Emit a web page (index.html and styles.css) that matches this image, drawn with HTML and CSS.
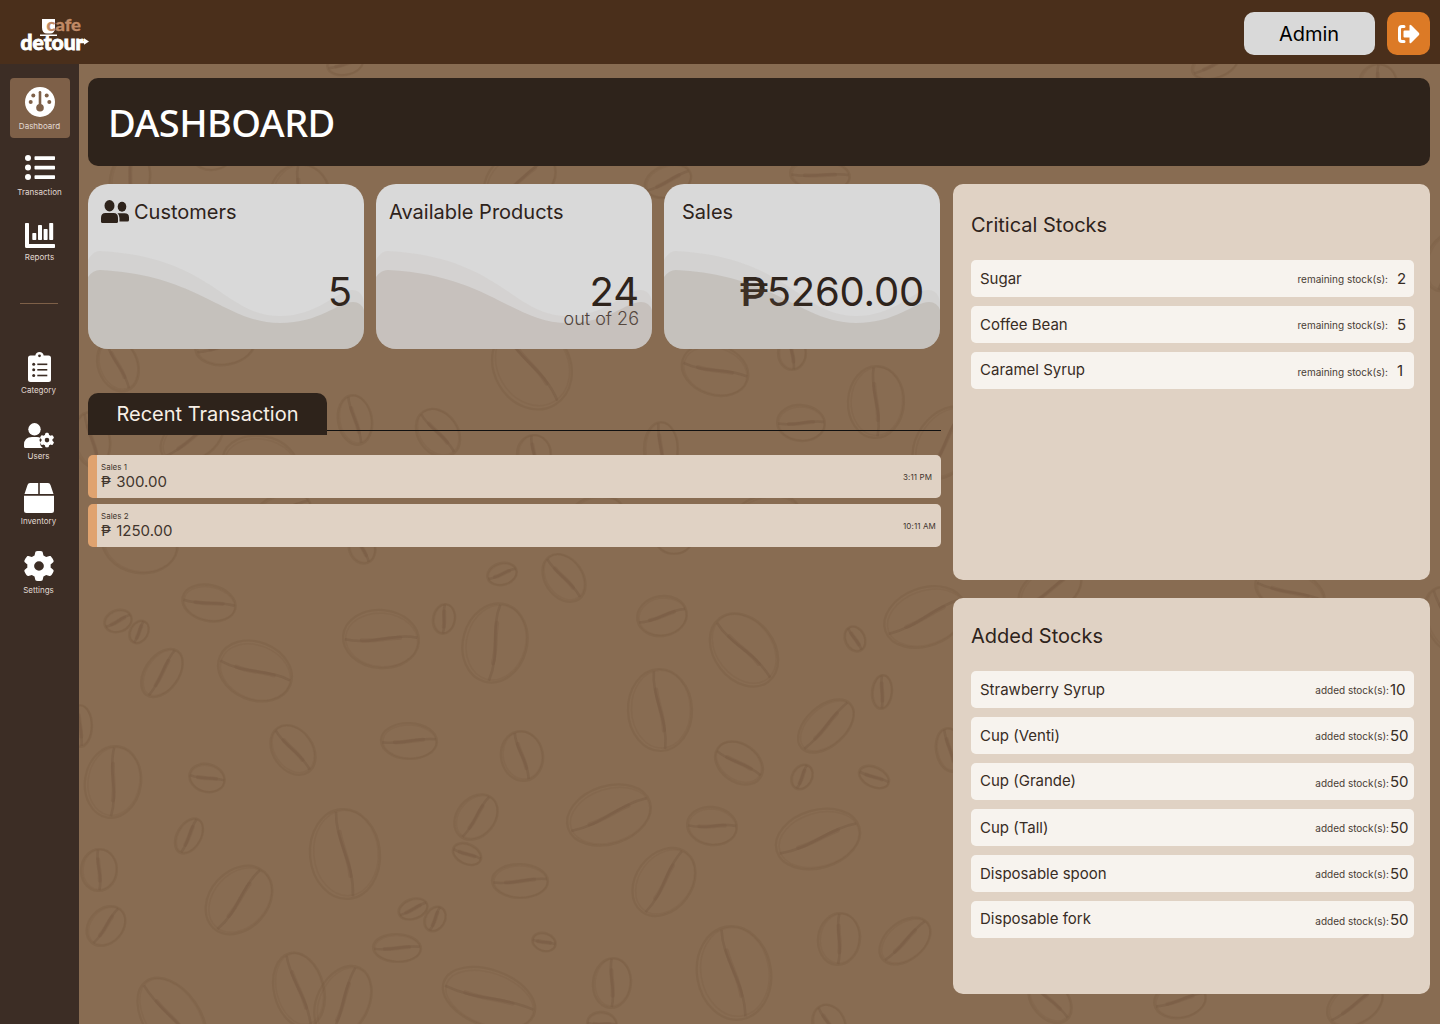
FILE: index.html
```html
<!DOCTYPE html>
<html lang="en">
<head>
<meta charset="utf-8">
<title>Cafe Detour - Dashboard</title>
<link rel="stylesheet" href="styles.css">
</head>
<body>
<svg class="defs" aria-hidden="true">
  <defs>
    <g id="bean">
      <ellipse rx="1" ry="1"/>
      <ellipse class="sketch" cx=".03" cy="-.02" rx=".92" ry=".95"/>
      <path class="crease" d="M-.15-.95C-.25-.3.25.2.12.95"/>
      <path class="crease core" d="M-.1-.5C-.05-.1.1.1.1.5"/>
    </g>
    <path id="gear" fill-rule="evenodd" d="M495.900 166.600c3.200 8.700.5 18.400-6.400 24.600l-43.300 39.400c1.100 8.300 1.700 16.800 1.700 25.400s-.6 17.100-1.700 25.400l43.300 39.400c6.900 6.200 9.600 15.900 6.400 24.600c-4.400 11.900-9.700 23.300-15.800 34.300l-4.700 8.100c-6.600 11-14 21.400-22.100 31.200c-5.900 7.200-15.700 9.600-24.500 6.800l-55.700-17.700c-13.400 10.300-28.200 18.900-44 25.400l-12.500 57.100c-2 9.100-9 16.300-18.200 17.800c-13.800 2.300-28 3.500-42.500 3.500s-28.700-1.200-42.500-3.500c-9.200-1.500-16.200-8.700-18.200-17.800l-12.500-57.100c-15.800-6.500-30.600-15.100-44-25.400L83.100 425.900c-8.800 2.800-18.600.3-24.500-6.800c-8.100-9.800-15.500-20.200-22.100-31.200l-4.700-8.100c-6.100-11-11.400-22.400-15.800-34.300c-3.200-8.700-.5-18.400 6.400-24.600l43.300-39.400C64.600 273.100 64 264.600 64 256s.6-17.100 1.700-25.400L22.400 191.200c-6.900-6.200-9.600-15.900-6.400-24.600c4.400-11.900 9.700-23.300 15.800-34.300l4.700-8.100c6.600-11 14-21.400 22.100-31.200c5.900-7.200 15.700-9.600 24.500-6.800l55.700 17.700c13.400-10.300 28.200-18.900 44-25.400l12.500-57.100c2-9.100 9-16.300 18.200-17.800C227.300 1.200 241.500 0 256 0s28.700 1.200 42.500 3.500c9.200 1.500 16.200 8.700 18.200 17.800l12.500 57.100c15.800 6.500 30.600 15.100 44 25.400l55.700-17.700c8.800-2.800 18.600-.3 24.500 6.800c8.100 9.800 15.500 20.200 22.100 31.200l4.700 8.100c6.100 11 11.400 22.400 15.800 34.300zM256 336a80 80 0 1 0 0-160 80 80 0 1 0 0 160z"/>
    <g id="waves">
      <path class="wave-back" d="M0 76Q5 67 12 67C125 73 136 132 192 132C230 132 250 106 264 106Q274 106 276 118V165H0Z"/>
      <path class="wave-front" d="M0 93Q5 86 12 86C112 91 137 139 192 139C232 139 250 118 265 118Q273 118 276 126V165H0Z"/>
    </g>
  </defs>
</svg>

<header class="topbar">
  <svg class="logo" width="70" height="36" viewBox="0 0 70 36">
    <path d="M22 3H35V11.500Q35 17.500 30 17.500H27Q22 17.500 22 11.500ZM20 18.500H37V20H20Z" fill="#fff"/>
    <text class="logo-cafe" x="26.500" y="15" textLength="34.500" lengthAdjust="spacingAndGlyphs">cafe</text>
    <text class="logo-detour" x=".5" y="33.800" textLength="63" lengthAdjust="spacingAndGlyphs">detour</text>
    <path d="M60 25H64V22.300L69 25.500L64 28.700V27.200H60Z" fill="#fff"/>
  </svg>
  <div class="user">Admin</div>
  <button class="logout" aria-label="Log out">
    <svg width="24" height="22" viewBox="0 0 24 22"><path d="M8 3.500H6Q3.500 3.500 3.500 6V16Q3.500 18.500 6 18.500H8" fill="none" stroke="#fff" stroke-width="3" stroke-linecap="round"/><path d="M8.500 7.500H13.500V3Q13.500 1 15.300 2.300L23 10Q23.700 11 23 12L15.300 19.700Q13.500 21 13.500 19V14.500H8.500Q7.500 14.500 7.500 13.500V8.500Q7.500 7.500 8.500 7.500Z" fill="#fff"/></svg>
  </button>
</header>

<div class="shell">
  <nav class="sidebar">
    <a class="nav-item active">
      <svg viewBox="0 0 30 30"><circle cx="15" cy="15" r="15"/><g class="cut"><circle cx="8.300" cy="8.500" r="2"/><circle cx="21.700" cy="8.500" r="2"/><circle cx="5.700" cy="15" r="2"/><circle cx="24.300" cy="15" r="2"/><circle cx="15" cy="20.800" r="3.800"/><rect x="13.700" y="4" width="2.600" height="15" rx="1.300"/></g></svg>
      <span>Dashboard</span>
    </a>
    <a class="nav-item">
      <svg viewBox="0 0 30 30"><circle cx="3" cy="5" r="3"/><circle cx="3" cy="14.500" r="3"/><circle cx="3" cy="24" r="3"/><rect x="9.500" y="3.200" width="20.500" height="3.800" rx=".7"/><rect x="9.500" y="12.700" width="20.500" height="3.800" rx=".7"/><rect x="9.500" y="22.200" width="20.500" height="3.800" rx=".7"/></svg>
      <span>Transaction</span>
    </a>
    <a class="nav-item">
      <svg viewBox="0 0 30 30"><path d="M.8 5H3.200Q4 5 4 5.800V26H29.200Q30 26 30 26.800V29.200Q30 30 29.200 30H1.500Q0 30 0 28.500V5.800Q0 5 .8 5Z"/><rect x="7.300" y="15" width="4" height="7" rx=".7"/><rect x="13" y="7" width="4" height="15" rx=".7"/><rect x="18.600" y="11" width="4" height="11" rx=".7"/><rect x="24.200" y="5" width="4" height="17" rx=".7"/></svg>
      <span>Reports</span>
    </a>
    <hr class="divider">
    <a class="nav-item">
      <svg viewBox="0 0 30 30"><path d="M6.500 4.500H11.300Q12 1 15.500 1Q19 1 19.700 4.500H24.500Q27 4.500 27 7V28.500Q27 31 24.500 31H6.500Q4 31 4 28.500V7Q4 4.500 6.500 4.500Z"/><g class="cut"><circle cx="15.500" cy="4.800" r="1.400"/><circle cx="9.700" cy="13.200" r="1.500"/><circle cx="9.700" cy="18.700" r="1.500"/><circle cx="9.700" cy="24.500" r="1.500"/><rect x="13.300" y="12.500" width="10" height="1.600"/><rect x="13.300" y="18" width="10" height="1.600"/><rect x="13.300" y="23.700" width="10" height="1.600"/></g></svg>
      <span>Category</span>
    </a>
    <a class="nav-item">
      <svg viewBox="0 0 30 30"><circle cx="10.500" cy="12.300" r="6.200"/><path d="M8 20H13Q15 20 16.500 21Q14.500 23 16.500 25.500Q15.500 28.500 18.500 30.500V31H1.500Q0 31 0 29.500V28Q0 20 8 20Z"/><use href="#gear" transform="translate(15.700 15.800) scale(.0285)"/></svg>
      <span>Users</span>
    </a>
    <a class="nav-item">
      <svg viewBox="0 0 30 30"><path d="M6 1H14.200V12H.5L3.500 3Q4.100 1 6 1ZM15.800 1H24Q25.900 1 26.500 3L29.500 12H15.800ZM0 13.700H30V28.500Q30 31 27.500 31H2.500Q0 31 0 28.500Z"/></svg>
      <span>Inventory</span>
    </a>
    <a class="nav-item last">
      <svg viewBox="0 0 30 30"><use href="#gear" transform="translate(-.6 0) scale(.0609 .0586)"/></svg>
      <span>Settings</span>
    </a>
  </nav>

  <main class="content">
    <svg class="beans" width="1361" height="960" viewBox="79 64 1361 960" aria-hidden="true">
      <use href="#bean" transform="translate(140 543) rotate(100) scale(30 38)"/>
      <use href="#bean" transform="translate(209 603) rotate(102) scale(18 27)"/>
      <use href="#bean" transform="translate(118 621) rotate(70) scale(11 14)"/>
      <use href="#bean" transform="translate(139 632) rotate(30) scale(9 12)"/>
      <use href="#bean" transform="translate(162 673) rotate(35) scale(17 27)"/>
      <use href="#bean" transform="translate(255 671) rotate(112) scale(29 38)"/>
      <use href="#bean" transform="translate(381 639) rotate(95) scale(29 38)"/>
      <use href="#bean" transform="translate(444 619) rotate(10) scale(11 15)"/>
      <use href="#bean" transform="translate(495 643) rotate(15) scale(32 40)"/>
      <use href="#bean" transform="translate(293 750) rotate(-35) scale(20 27)"/>
      <use href="#bean" transform="translate(409 741) rotate(92) scale(18 28)"/>
      <use href="#bean" transform="translate(522 756) rotate(-10) scale(21 25)"/>
      <use href="#bean" transform="translate(113 782) rotate(9) scale(28 36)"/>
      <use href="#bean" transform="translate(207 778) rotate(105) scale(14 18)"/>
      <use href="#bean" transform="translate(189 836) rotate(30) scale(12 19)"/>
      <use href="#bean" transform="translate(345 854) rotate(-5) scale(35 45)"/>
      <use href="#bean" transform="translate(476 817) rotate(40) scale(19 25)"/>
      <use href="#bean" transform="translate(467 854) rotate(115) scale(10 15)"/>
      <use href="#bean" transform="translate(99 870) rotate(5) scale(18 21)"/>
      <use href="#bean" transform="translate(239 900) rotate(42) scale(29 38)"/>
      <use href="#bean" transform="translate(106 926) rotate(42) scale(17 22)"/>
      <use href="#bean" transform="translate(413 909) rotate(70) scale(10 15)"/>
      <use href="#bean" transform="translate(435 919) rotate(30) scale(10 13)"/>
      <use href="#bean" transform="translate(397 948) rotate(92) scale(14 24)"/>
      <use href="#bean" transform="translate(520 881) rotate(91) scale(17 28)"/>
      <use href="#bean" transform="translate(299 990) rotate(-14) scale(25 38)"/>
      <use href="#bean" transform="translate(343 1002) rotate(26) scale(26 38)"/>
      <use href="#bean" transform="translate(489 998) rotate(110) scale(28 48)"/>
      <use href="#bean" transform="translate(172 1018) rotate(-35) scale(28 45)"/>
      <use href="#bean" transform="translate(80 726) scale(12 21)"/>
      <use href="#bean" transform="translate(502 574) rotate(75) scale(11 15)"/>
      <use href="#bean" transform="translate(564 578) rotate(-35) scale(19 26)"/>
      <use href="#bean" transform="translate(662 616) rotate(80) scale(20 25)"/>
      <use href="#bean" transform="translate(744 650) rotate(-38) scale(30 40)"/>
      <use href="#bean" transform="translate(855 639) rotate(-25) scale(10 13)"/>
      <use href="#bean" transform="translate(925 617) rotate(70) scale(29 42)"/>
      <use href="#bean" transform="translate(882 692) rotate(5) scale(10 17)"/>
      <use href="#bean" transform="translate(660 710) rotate(-2) scale(32 41)"/>
      <use href="#bean" transform="translate(826 726) rotate(48) scale(20 33)"/>
      <use href="#bean" transform="translate(739 763) rotate(-55) scale(19 26)"/>
      <use href="#bean" transform="translate(802 777) rotate(30) scale(10 13)"/>
      <use href="#bean" transform="translate(874 777) rotate(115) scale(10 16)"/>
      <use href="#bean" transform="translate(609 815) rotate(72) scale(29 43)"/>
      <use href="#bean" transform="translate(712 826) rotate(97) scale(19 25)"/>
      <use href="#bean" transform="translate(818 839) rotate(74) scale(29 43)"/>
      <use href="#bean" transform="translate(664 882) rotate(37) scale(28 37)"/>
      <use href="#bean" transform="translate(544 942) rotate(108) scale(9 12)"/>
      <use href="#bean" transform="translate(612 983) rotate(6) scale(19 25)"/>
      <use href="#bean" transform="translate(734 973) rotate(-9) scale(37 47)"/>
      <use href="#bean" transform="translate(839 939) rotate(8) scale(21 26)"/>
      <use href="#bean" transform="translate(905 941) rotate(51) scale(19 29)"/>
      <use href="#bean" transform="translate(950 750) rotate(-10) scale(14 22)"/>
      <use href="#bean" transform="translate(829 1024) rotate(-25) scale(16 20)"/>
      <use href="#bean" transform="translate(602 1024) rotate(100) scale(12 15)"/>
      <use href="#bean" transform="translate(532 366) rotate(-30) scale(38 45)"/>
      <use href="#bean" transform="translate(715 370) rotate(108) scale(25 34)"/>
      <use href="#bean" transform="translate(792 353) scale(14 17)"/>
      <use href="#bean" transform="translate(438 433) rotate(-35) scale(20 26)"/>
      <use href="#bean" transform="translate(534 454) scale(17 19)"/>
      <use href="#bean" transform="translate(661 449) scale(17 27)"/>
      <use href="#bean" transform="translate(801 423) rotate(94) scale(18 24)"/>
      <use href="#bean" transform="translate(876 402) rotate(3) scale(28 36)"/>
      <use href="#bean" transform="translate(945 443) rotate(35) scale(28 40)"/>
      <use href="#bean" transform="translate(597 512) rotate(80) scale(16 26)"/>
      <use href="#bean" transform="translate(766 520) rotate(75) scale(25 36)"/>
      <use href="#bean" transform="translate(674 540) rotate(90) scale(14 18)"/>
      <use href="#bean" transform="translate(355 420) rotate(-10) scale(17 25)"/>
      <use href="#bean" transform="translate(192 438) rotate(60) scale(22 34)"/>
      <use href="#bean" transform="translate(260 464) rotate(100) scale(28 38)"/>
      <use href="#bean" transform="translate(92 440) rotate(-10) scale(18 28)"/>
      <use href="#bean" transform="translate(283 510) rotate(75) scale(16 28)"/>
      <use href="#bean" transform="translate(362 548) rotate(-20) scale(13 16)"/>
      <use href="#bean" transform="translate(225 345) rotate(80) scale(20 30)"/>
      <use href="#bean" transform="translate(118 365) rotate(-20) scale(20 27)"/>
      <use href="#bean" transform="translate(213 155) rotate(80) scale(15 20)"/>
      <use href="#bean" transform="translate(300 196) rotate(5) scale(30 32)"/>
      <use href="#bean" transform="translate(130 180) rotate(10) scale(20 30)"/>
      <use href="#bean" transform="translate(520 180) rotate(60) scale(28 38)"/>
      <use href="#bean" transform="translate(668 181) rotate(70) scale(16 24)"/>
      <use href="#bean" transform="translate(820 175) rotate(95) scale(16 30)"/>
      <use href="#bean" transform="translate(1378 84) rotate(10) scale(19 20)"/>
      <use href="#bean" transform="translate(1215 64) rotate(70) scale(14 24)"/>
      <use href="#bean" transform="translate(345 64) rotate(80) scale(11 18)"/>
      <use href="#bean" transform="translate(1050 590) rotate(60) scale(22 34)"/>
      <use href="#bean" transform="translate(1290 592) rotate(110) scale(22 36)"/>
      <use href="#bean" transform="translate(1180 1000) rotate(80) scale(18 26)"/>
      <use href="#bean" transform="translate(1355 1004) rotate(60) scale(20 30)"/>
      <use href="#bean" transform="translate(1050 1000) rotate(-40) scale(18 26)"/>
      <use href="#bean" transform="translate(1446 262) rotate(20) scale(20 30)"/>
      <use href="#bean" transform="translate(1448 620) rotate(-20) scale(22 34)"/>
    </svg>

    <h1 class="page-title">DASHBOARD</h1>

    <div class="columns">
      <section class="left">
        <div class="cards">
          <article class="card">
            <h2 class="with-icon"><svg width="28" height="24" viewBox="0 0 28 24"><ellipse cx="8.500" cy="5.700" rx="5" ry="5.700"/><ellipse cx="21" cy="6.700" rx="4.300" ry="5"/><path d="M4.500 13H12.500Q17 13 17 18V21.500Q17 23 15.500 23H1.500Q0 23 0 21.500V18Q0 13 4.500 13Z"/><path d="M16.500 13.300H23.500Q28 13.300 28 17.500V20Q28 21.500 26.500 21.500H18.500V18Q18.500 15 16.500 13.300Z"/></svg>Customers</h2>
            <p class="figure one">5</p>
            <svg class="wave" viewBox="0 0 276 165"><use href="#waves"/></svg>
          </article>
          <article class="card">
            <h2>Available Products</h2>
            <p class="figure">24</p>
            <p class="note">out of 26</p>
            <svg class="wave rosy" viewBox="0 0 276 165"><use href="#waves"/></svg>
          </article>
          <article class="card">
            <h2 class="indent">Sales</h2>
            <p class="figure sales"><span class="peso">₱</span>5260.00</p>
            <svg class="wave" viewBox="0 0 276 165"><use href="#waves"/></svg>
          </article>
        </div>

        <div class="section-head"><h2>Recent Transaction</h2><span class="rule"></span></div>
        <ul class="transactions">
          <li><div><small>Sales 1</small><b>₱ 300.00</b></div><time>3:11 PM</time></li>
          <li><div><small>Sales 2</small><b>₱ 1250.00</b></div><time>10:11 AM</time></li>
        </ul>
      </section>

      <aside class="right">
        <section class="panel critical">
          <h2>Critical Stocks</h2>
          <ul>
            <li><span>Sugar</span><small>remaining stock(s):</small><b>2</b></li>
            <li><span>Coffee Bean</span><small>remaining stock(s):</small><b>5</b></li>
            <li class="raised"><span>Caramel Syrup</span><small>remaining stock(s):</small><b>1</b></li>
          </ul>
        </section>
        <section class="panel added">
          <h2>Added Stocks</h2>
          <ul>
            <li><span>Strawberry Syrup</span><small>added stock(s):</small><b>10</b></li>
            <li><span>Cup (Venti)</span><small>added stock(s):</small><b>50</b></li>
            <li class="raised"><span>Cup (Grande)</span><small>added stock(s):</small><b>50</b></li>
            <li><span>Cup (Tall)</span><small>added stock(s):</small><b>50</b></li>
            <li><span>Disposable spoon</span><small>added stock(s):</small><b>50</b></li>
            <li class="raised"><span>Disposable fork</span><small>added stock(s):</small><b>50</b></li>
          </ul>
        </section>
      </aside>
    </div>
  </main>
</div>
</body>
</html>
```
FILE: styles.css
```css
* { box-sizing: border-box; margin: 0; padding: 0; }
body {
  width: 1440px;
  height: 1024px;
  overflow: hidden;
  background: #886c52;
  color: #2e231b;
  font-family: Inter, "Liberation Sans", sans-serif;
}
ul { list-style: none; }
h1, h2, b { font-weight: 400; }
.defs { display: block; width: 0; height: 0; }

.topbar {
  display: flex;
  align-items: center;
  height: 64px;
  padding: 3px 10px 0 20px;
  background: #4a2f1b;
}
.logo { margin: 0 auto 0 0; overflow: visible; }
.logo text { font-family: Lato, sans-serif; font-weight: 900; }
.logo-cafe { font-size: 17px; fill: #c08a66; stroke: #c08a66; stroke-width: .3px; }
.logo-detour { font-size: 20px; fill: #fff; stroke: #fff; stroke-width: .8px; }
.user {
  width: 131px;
  height: 43px;
  margin-right: 12px;
  padding-right: 1px;
  border-radius: 10px;
  background: #d9d9d9;
  color: #000;
  font-size: 20px;
  line-height: 44px;
  text-align: center;
}
.logout {
  display: flex;
  align-items: center;
  justify-content: center;
  width: 43px;
  height: 43px;
  padding-right: 2px;
  border: 0;
  border-radius: 10px;
  background: #dc7a26;
}

.shell { display: flex; height: 960px; }
.sidebar {
  flex: none;
  width: 79px;
  padding: 14px 10px 0 9px;
  background: #3c2d25;
}
.nav-item {
  display: flex;
  flex-direction: column;
  align-items: center;
  width: 60px;
  height: 60px;
  margin-bottom: 5.500px;
  padding-top: 9px;
  border-radius: 4px;
  color: #e2dad3;
  font-size: 8px;
  line-height: 10px;
}
.nav-item svg { width: 30px; height: 30px; fill: #fff; overflow: visible; }
.nav-item span { margin: 4px 1px 0 0; }
.nav-item .cut { fill: #3c2d25; }
.nav-item.active { background: #7e6048; }
.nav-item:nth-child(-n+3) { margin-left: 1px; }
.nav-item.active .cut { fill: #7e6048; }
.nav-item.last { margin-top: 8.500px; }
.divider { width: 38px; margin: 34px 0 38px 11px; border: 0; border-top: 1px solid #7e6048; }

.content { position: relative; flex: 1; padding: 14px 10px 0 9px; }
.beans { position: absolute; inset: 0; fill: none; stroke: #785b43; stroke-opacity: .35; stroke-width: 2.200; }
#bean ellipse, #bean path { vector-effect: non-scaling-stroke; }
#bean .sketch { stroke-width: 1.500; stroke-opacity: .2; }
#bean .crease { stroke-width: 2.500; stroke-opacity: .5; }
#bean .core { stroke-width: 4; stroke-opacity: .3; stroke-linecap: round; }

.page-title {
  position: relative;
  height: 88px;
  padding-left: 20px;
  border-radius: 10px;
  background: #2e231b;
  color: #fff;
  font: 460 38px/89px "Noto Sans", sans-serif;
  letter-spacing: -.55px;
}
.columns { position: relative; display: flex; gap: 12px; margin-top: 18px; }
.left { width: 853px; }
.cards { display: flex; gap: 12px; }
.card {
  position: relative;
  flex: none;
  width: 276px;
  height: 165px;
  padding: 16px 13px 0;
  border-radius: 20px;
  background: #d9d9d9;
  overflow: hidden;
}
.card h2 { height: 24px; font-size: 20px; line-height: 24px; }
.card h2.indent { padding-left: 5px; }
.with-icon { display: flex; gap: 5px; }
.with-icon svg { flex: none; fill: #2e231b; }
.figure { margin-top: 51px; font-size: 40px; line-height: 34px; text-align: right; }
.figure.one { margin-right: -1px; }
.figure.sales { padding-right: 3px; letter-spacing: -.2px; }
.peso { display: inline-block; transform: scaleX(1.080); font-weight: 500; }
.note { font-size: 18px; line-height: 20px; font-weight: 300; text-align: right; color: #4a403a; }
.wave { position: absolute; left: 0; top: 0; width: 276px; height: 165px; }
.wave { fill: #7f6b52; }
.wave.rosy { fill: #856855; }
.wave-back { opacity: .05; }
.wave-front { opacity: .16; }

.section-head { display: flex; height: 42px; margin-top: 44px; }
.section-head h2 {
  width: 239px;
  border-radius: 10px 10px 0 0;
  background: #2e231b;
  color: #f7efe6;
  font-size: 20px;
  line-height: 42px;
  text-align: center;
}
.rule { flex: 1; height: 1px; margin-top: 37px; background: #111; }
.transactions { display: grid; gap: 6px; margin-top: 20px; }
.transactions li {
  display: flex;
  justify-content: space-between;
  height: 43px;
  padding: 7px 0 0 4px;
  border-left: 9px solid #e0a36f;
  border-radius: 5px;
  background: #e0d2c4;
  color: #41352d;
}
.transactions small { display: block; font-size: 8px; line-height: 10px; }
.transactions b { display: block; font-size: 15px; line-height: 19px; word-spacing: 1px; }
.transactions time { width: 38px; padding-top: 10px; font-size: 8px; line-height: 10px; letter-spacing: .1px; white-space: nowrap; }

.right { display: grid; gap: 18px; width: 477px; }
.panel { height: 396px; padding: 29px 16px 0 18px; border-radius: 10px; background: #e0d2c4; }
.panel h2 { font-size: 20px; line-height: 24px; }
.panel ul { display: grid; gap: 9px; margin-top: 23px; }
.added { padding-top: 26px; }
.added ul { margin-top: 23px; }
.panel li {
  display: flex;
  align-items: center;
  height: 37px;
  padding-left: 9px;
  border-radius: 5px;
  background: #f7f3ee;
  color: #382c24;
  font-size: 15px;
}
.panel li span { flex: 1; }
.panel li.raised span { padding-bottom: 2px; }
.panel small { padding-top: 1px; font-size: 10px; color: #493d35; }
.panel .raised small { padding-top: 2px; }
.critical b { width: 17px; margin-left: 9px; }
.added b { width: 24px; margin-left: 1px; }
```
